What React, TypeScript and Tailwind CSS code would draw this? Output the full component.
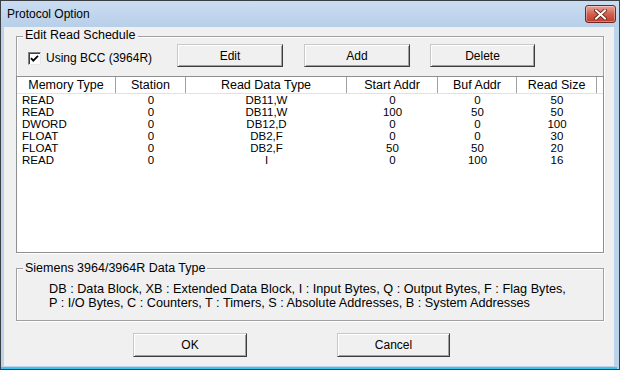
import React from 'react';

const rows = [
    ['READ', '0', 'DB11,W', '0', '0', '50'],
    ['READ', '0', 'DB11,W', '100', '50', '50'],
    ['DWORD', '0', 'DB12,D', '0', '0', '100'],
    ['FLOAT', '0', 'DB2,F', '0', '0', '30'],
    ['FLOAT', '0', 'DB2,F', '50', '50', '20'],
    ['READ', '0', 'I', '0', '100', '16'],
];

const columns = ['Memory Type', 'Station', 'Read Data Type', 'Start Addr', 'Buf Addr', 'Read Size'];

const gridCols = 'grid grid-cols-[99px_70px_161px_91px_79px_80px_1fr]';

const Button = ({ text, className = '' }: { text: string; className?: string }) => (
    <button
        type="button"
        className={`h-[23px] border border-t-[#c8c8c8] border-l-[#c8c8c8] border-b-[#3c3c3c] border-r-[#3c3c3c] bg-[#f0f0f0] text-[12px] leading-[14px] text-black shadow-[inset_1px_1px_0_#ffffff,inset_-1px_-1px_0_#a0a0a0] ${className}`}
    >
        {text}
    </button>
);

const GroupLabel = ({ text, top }: { text: string; top: string }) => (
    <span className={`absolute left-[6px] ${top} bg-[#f0f0f0] px-[2px] text-[12.5px] leading-[14px] text-black`}>
        {text}
    </span>
);

const App: React.FC = () => {
    return (
        <div className="w-[620px] h-[370px] border border-[#3a3f46] bg-[#bcd3ec] flex flex-col font-['Liberation_Sans',Arial,sans-serif] select-none">
            {/* title bar */}
            <div className="h-[26px] flex items-start justify-between bg-gradient-to-b from-[#cadcf1] to-[#b8cfe9]">
                <span className="pl-[6px] mt-[6px] text-[12px] leading-[14px] text-black">Protocol Option</span>
                <div className="mt-[4px] mr-[3px] w-[31px] h-[18px] rounded-[3px] border border-[#6e2a22] bg-gradient-to-b from-[#e9a597] via-[#d0604e] to-[#c03a2c] shadow-[inset_0_0_0_1px_rgba(255,255,255,0.35)] flex items-center justify-center">
                    <svg width="13" height="11" viewBox="0 0 13 11">
                        <path d="M2 1.5 L11 9.5 M11 1.5 L2 9.5" stroke="#5a1a12" strokeWidth="3.6" strokeLinecap="square" />
                        <path d="M2 1.5 L11 9.5 M11 1.5 L2 9.5" stroke="#ffffff" strokeWidth="2" strokeLinecap="square" />
                    </svg>
                </div>
            </div>

            {/* client area */}
            <div className="flex-1 ml-[3px] mr-[5px] bg-[#f0f0f0] flex flex-col">
                <div className="relative ml-[12px] mt-[9px] w-[588px] h-[217px] border border-[#a0a0a0] shadow-[inset_1px_1px_0_#ffffff,1px_1px_0_#ffffff] flex flex-col">
                    <GroupLabel text="Edit Read Schedule" top="top-[-9px]" />
                    <div className="mt-[7px] h-[23px] flex">
                        <label className="w-[160px] pl-[11px] mt-[7px] h-[14px] flex items-center gap-[5px] text-[12px] leading-[14px] text-black">
                            <span className="w-[13px] h-[13px] bg-white border border-t-[#808080] border-l-[#808080] border-b-[#e8e8e8] border-r-[#e8e8e8] shadow-[inset_1px_1px_0_#404040] flex items-center justify-center">
                                <svg width="9" height="9" viewBox="0 0 9 9">
                                    <path d="M1 4.2 L3.3 6.6 L8 1.8" fill="none" stroke="#000" strokeWidth="1.8" />
                                </svg>
                            </span>
                            Using BCC (3964R)
                        </label>
                        <Button text="Edit" className="w-[106px]" />
                        <Button text="Add" className="w-[106px] ml-[21px]" />
                        <Button text="Delete" className="w-[105px] ml-[20px]" />
                    </div>

                    <div className="-mx-px -mb-px mt-[9px] flex-1 bg-white border border-[#8e8f8f]">
                        <div className={`${gridCols} h-[17px] border-b border-[#e2e2e2] text-[12.5px] leading-[16px] text-black`}>
                            {columns.map((c) => (
                                <div key={c} className="text-center border-r border-[#a0a0a0]">
                                    {c}
                                </div>
                            ))}
                            <div />
                        </div>
                        {rows.map((r, i) => (
                            <div key={i} className={`${gridCols} h-[12px] text-[11.5px] leading-[12px] text-black`}>
                                {r.map((v, j) => (
                                    <div key={j} className={j === 0 ? 'pl-[5px]' : 'text-center'}>
                                        {v}
                                    </div>
                                ))}
                                <div />
                            </div>
                        ))}
                    </div>
                </div>

                <div className="relative ml-[12px] mt-[15px] w-[588px] h-[53px] border border-[#a0a0a0] shadow-[inset_1px_1px_0_#ffffff,1px_1px_0_#ffffff] pt-[13px] pl-[32px] text-[12.7px] leading-[14px] text-black">
                    <GroupLabel text="Siemens 3964/3964R Data Type" top="top-[-8px]" />
                    <div>DB : Data Block, XB : Extended Data Block, I : Input Bytes, Q : Output Bytes, F : Flag Bytes,</div>
                    <div>P : I/O Bytes, C : Counters, T : Timers, S : Absolute Addresses, B : System Addresses</div>
                </div>

                <div className="mt-[12px] flex">
                    <Button text="OK" className="w-[114px] h-[24px] ml-[129px]" />
                    <Button text="Cancel" className="w-[113px] h-[24px] ml-[90px]" />
                </div>
            </div>
            <div className="h-[3px] mr-[2px] border-b-2 border-[#3ec3ef]" />
        </div>
    );
};

export default App;
